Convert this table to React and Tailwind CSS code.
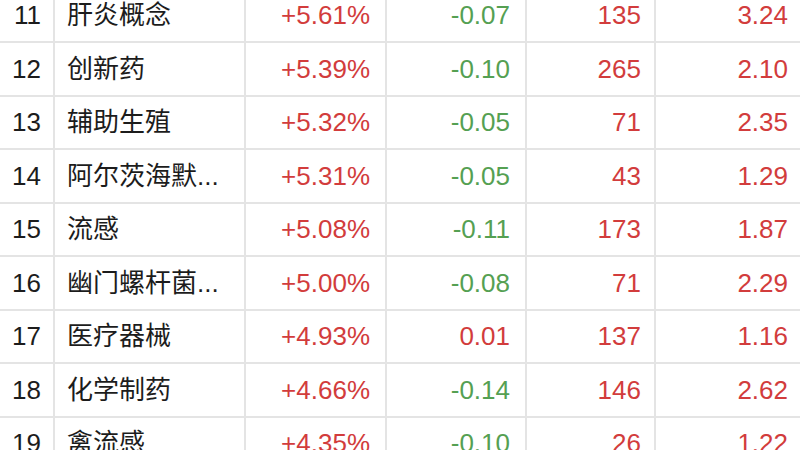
import React from 'react';

const rows = [
  { rank: 11, name: '肝炎概念', pct: '+5.61%', speed: '-0.07', count: '135', ratio: '3.24' },
  { rank: 12, name: '创新药', pct: '+5.39%', speed: '-0.10', count: '265', ratio: '2.10' },
  { rank: 13, name: '辅助生殖', pct: '+5.32%', speed: '-0.05', count: '71', ratio: '2.35' },
  { rank: 14, name: '阿尔茨海默...', pct: '+5.31%', speed: '-0.05', count: '43', ratio: '1.29' },
  { rank: 15, name: '流感', pct: '+5.08%', speed: '-0.11', count: '173', ratio: '1.87' },
  { rank: 16, name: '幽门螺杆菌...', pct: '+5.00%', speed: '-0.08', count: '71', ratio: '2.29' },
  { rank: 17, name: '医疗器械', pct: '+4.93%', speed: '0.01', count: '137', ratio: '1.16' },
  { rank: 18, name: '化学制药', pct: '+4.66%', speed: '-0.14', count: '146', ratio: '2.62' },
  { rank: 19, name: '禽流感', pct: '+4.35%', speed: '-0.10', count: '26', ratio: '1.22' },
];

const RED = 'text-[#d23c3c]';
const GREEN = 'text-[#55a052]';

const App = () => {
  return (
    <div
      className="w-[800px] h-[450px] overflow-hidden bg-white"
      style={{ fontFamily: '"Liberation Sans", "Noto Sans CJK SC", sans-serif' }}
    >
      <div className="-mt-[10.5px]">
        {rows.map((r) => (
          <div
            key={r.rank}
            className="grid grid-cols-[55px_191px_141px_140px_129px_1fr] h-[53.5px] border-b-2 border-[#e4e4e4] text-[26px] leading-none"
          >
            <div className="flex items-center justify-end pr-[12px] border-r-2 border-[#e4e4e4] text-[#1c1c1c]">
              {r.rank}
            </div>
            <div className="flex items-center pl-[12px] border-r-2 border-[#e4e4e4] text-[#1c1c1c] whitespace-nowrap overflow-hidden">
              {r.name}
            </div>
            <div className={`flex items-center justify-end pr-[15px] border-r-2 border-[#e4e4e4] ${RED}`}>
              {r.pct}
            </div>
            <div
              className={`flex items-center justify-end pr-[15px] border-r-2 border-[#e4e4e4] ${
                r.speed.startsWith('-') ? GREEN : RED
              }`}
            >
              {r.speed}
            </div>
            <div className={`flex items-center justify-end pr-[13px] border-r-2 border-[#e4e4e4] ${RED}`}>
              {r.count}
            </div>
            <div className={`flex items-center justify-end pr-[12px] ${RED}`}>{r.ratio}</div>
          </div>
        ))}
      </div>
    </div>
  );
};

export default App;
